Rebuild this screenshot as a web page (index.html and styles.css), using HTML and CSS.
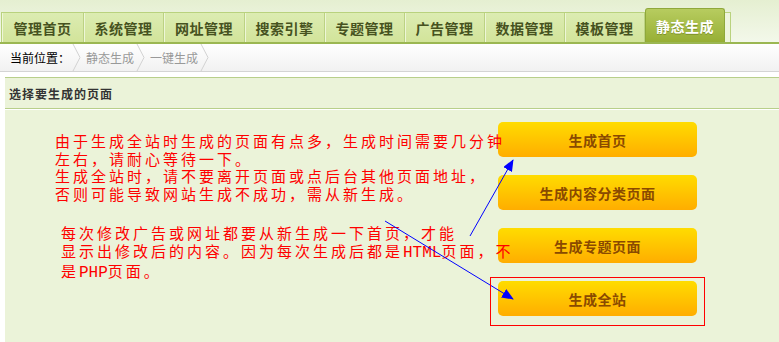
FILE: index.html
```html
<!DOCTYPE html>
<html lang="zh-CN">
<head>
    <meta charset="UTF-8">
    <title>静态生成 - 一键生成</title>
    <link rel="stylesheet" href="styles.css">
</head>
<body>
    <div class="topbar">
        <ul class="tabs">
            <li class="t1">管理首页</li>
            <li>系统管理</li>
            <li class="t3">网址管理</li>
            <li>搜索引擎</li>
            <li>专题管理</li>
            <li>广告管理</li>
            <li>数据管理</li>
            <li>模板管理</li>
            <li class="active">静态生成</li>
        </ul>
    </div>

    <div class="crumbs">
        <span class="here">当前位置：</span>
        <svg class="sep" width="10" height="27" viewBox="0 0 10 27"><polyline points="1,0 8,13.5 1,27" fill="none" stroke="#d2d2d2" stroke-width="1"/></svg>
        <span>静态生成</span>
        <svg class="sep" width="10" height="27" viewBox="0 0 10 27"><polyline points="1,0 8,13.5 1,27" fill="none" stroke="#d2d2d2" stroke-width="1"/></svg>
        <span>一键生成</span>
        <svg class="sep" width="10" height="27" viewBox="0 0 10 27"><polyline points="1,0 8,13.5 1,27" fill="none" stroke="#d2d2d2" stroke-width="1"/></svg>
    </div>

    <div class="panel">
        <div class="panel-head">选择要生成的页面</div>
        <div class="panel-body">
            <div class="btns">
                <a class="gen-btn">生成首页</a>
                <a class="gen-btn">生成内容分类页面</a>
                <a class="gen-btn">生成专题页面</a>
                <a class="gen-btn">生成全站</a>
            </div>

            <!-- annotations drawn over the page -->
            <div class="note note-a">
                由于生成全站时生成的页面有点多，生成时间需要几分钟<br>
                左右，请耐心等待一下。<br>
                生成全站时，请不要离开页面或点后台其他页面地址，<br>
                否则可能导致网站生成不成功，需从新生成。
            </div>
            <div class="note note-b">
                每次修改广告或网址都要从新生成一下首页，才能<br>
                显示出修改后的内容。因为每次生成后都是<span class="en">HTML</span>页面，不<br>
                是<span class="en">PHP</span>页面。
            </div>
            <svg class="marks" width="774" height="240" viewBox="0 0 774 240">
                <defs>
                    <marker id="head" markerWidth="12" markerHeight="10" refX="11" refY="5" orient="auto" markerUnits="userSpaceOnUse">
                        <path d="M0,0 L12,5 L0,10 Z" fill="#0000ff"/>
                    </marker>
                </defs>
                <line x1="465" y1="127" x2="508" y2="51" stroke="#0000ff" stroke-width="1" marker-end="url(#head)"/>
                <line x1="380" y1="112" x2="508" y2="190" stroke="#0000ff" stroke-width="1" marker-end="url(#head)"/>
                <rect x="485.5" y="168.5" width="214" height="48" fill="none" stroke="#ff0000" stroke-width="1"/>
            </svg>
        </div>
    </div>
</body>
</html>
```

FILE: styles.css
```css
* {
    box-sizing: border-box;
}
body {
    margin: 0;
    font-family: "Noto Sans CJK SC", sans-serif;
    font-size: 12px;
    background-color: #fff;
    overflow: hidden;
}
.topbar {
    padding-top: 12px;
    background: linear-gradient(to bottom, #e5efd1, #f3f8ea);
    border-bottom: 2px solid #9bb752;
}
.tabs {
    list-style: none;
    margin: 0 0 0 1px;
    padding: 0;
    display: flex;
    width: 730px;
    height: 30px;
    border: 1px solid #b9d27e;
    border-bottom: 0;
    background-color: #eef5dc;
}
.tabs li {
    width: 80px;
    height: 29px;
    display: flex;
    align-items: center;
    justify-content: center;
    font-size: 14px;
    font-weight: bold;
    letter-spacing: 0.5px;
    color: #465220;
    background: linear-gradient(to bottom, #dcecb2, #d2e49a);
    border-right: 1px solid #bcd283;
    box-shadow: inset 1px 0 0 #eef6d8;
}
.tabs li.t1 {
    width: 82px;
}
.tabs li.t3 {
    width: 81px;
}
.tabs li.active {
    margin-top: -5px;
    height: 34px;
    color: #fff;
    background: linear-gradient(to bottom, #b7cc5f, #97af35);
    border: 1px solid #8fa83a;
    border-bottom: 0;
    border-radius: 3px 3px 0 0;
    box-shadow: none;
    text-shadow: 0 1px 0 #7d9228;
}
.crumbs {
    height: 28px;
    display: flex;
    align-items: center;
    padding-left: 10px;
    background: linear-gradient(to bottom, #ffffff, #f1f1f1);
    border-bottom: 1px solid #d4d4d4;
    color: #999;
}
.crumbs .here {
    color: #000;
}
.crumbs .sep {
    display: block;
    margin: 0 4px 0 2px;
}
.panel {
    margin: 5px 0 0 5px;
    background-color: #ebf3d9;
    border-top: 1px solid #b8cf8a;
}
.panel-head {
    height: 31px;
    padding-left: 4px;
    display: flex;
    align-items: center;
    font-weight: bold;
    letter-spacing: 1px;
    color: #333;
    border-bottom: 1px solid #b8cf8a;
}
.panel-body {
    position: relative;
    height: 240px;
    border-top: 1px solid #fff;
    padding: 12px 0 0 493px;
}
.btns {
    display: flex;
    flex-direction: column;
    gap: 18px;
    width: 199px;
}
.gen-btn {
    display: flex;
    align-items: center;
    justify-content: center;
    height: 35px;
    border-radius: 5px;
    background: linear-gradient(to bottom, #ffdc00, #ffad00);
    color: #8a4a00;
    font-size: 14px;
    font-weight: bold;
    letter-spacing: 0.5px;
}
.note {
    position: absolute;
    color: #ff0000;
    font-size: 15px;
    letter-spacing: 3px;
    white-space: nowrap;
}
.note .en {
    font-family: "Liberation Mono", monospace;
    font-size: 16px;
    letter-spacing: 0;
}
.note-a {
    left: 50px;
    top: 22px;
    line-height: 17.5px;
}
.note-b {
    left: 56px;
    top: 114px;
    line-height: 18px;
}
.marks {
    position: absolute;
    left: 0;
    top: -1px;
}
```
